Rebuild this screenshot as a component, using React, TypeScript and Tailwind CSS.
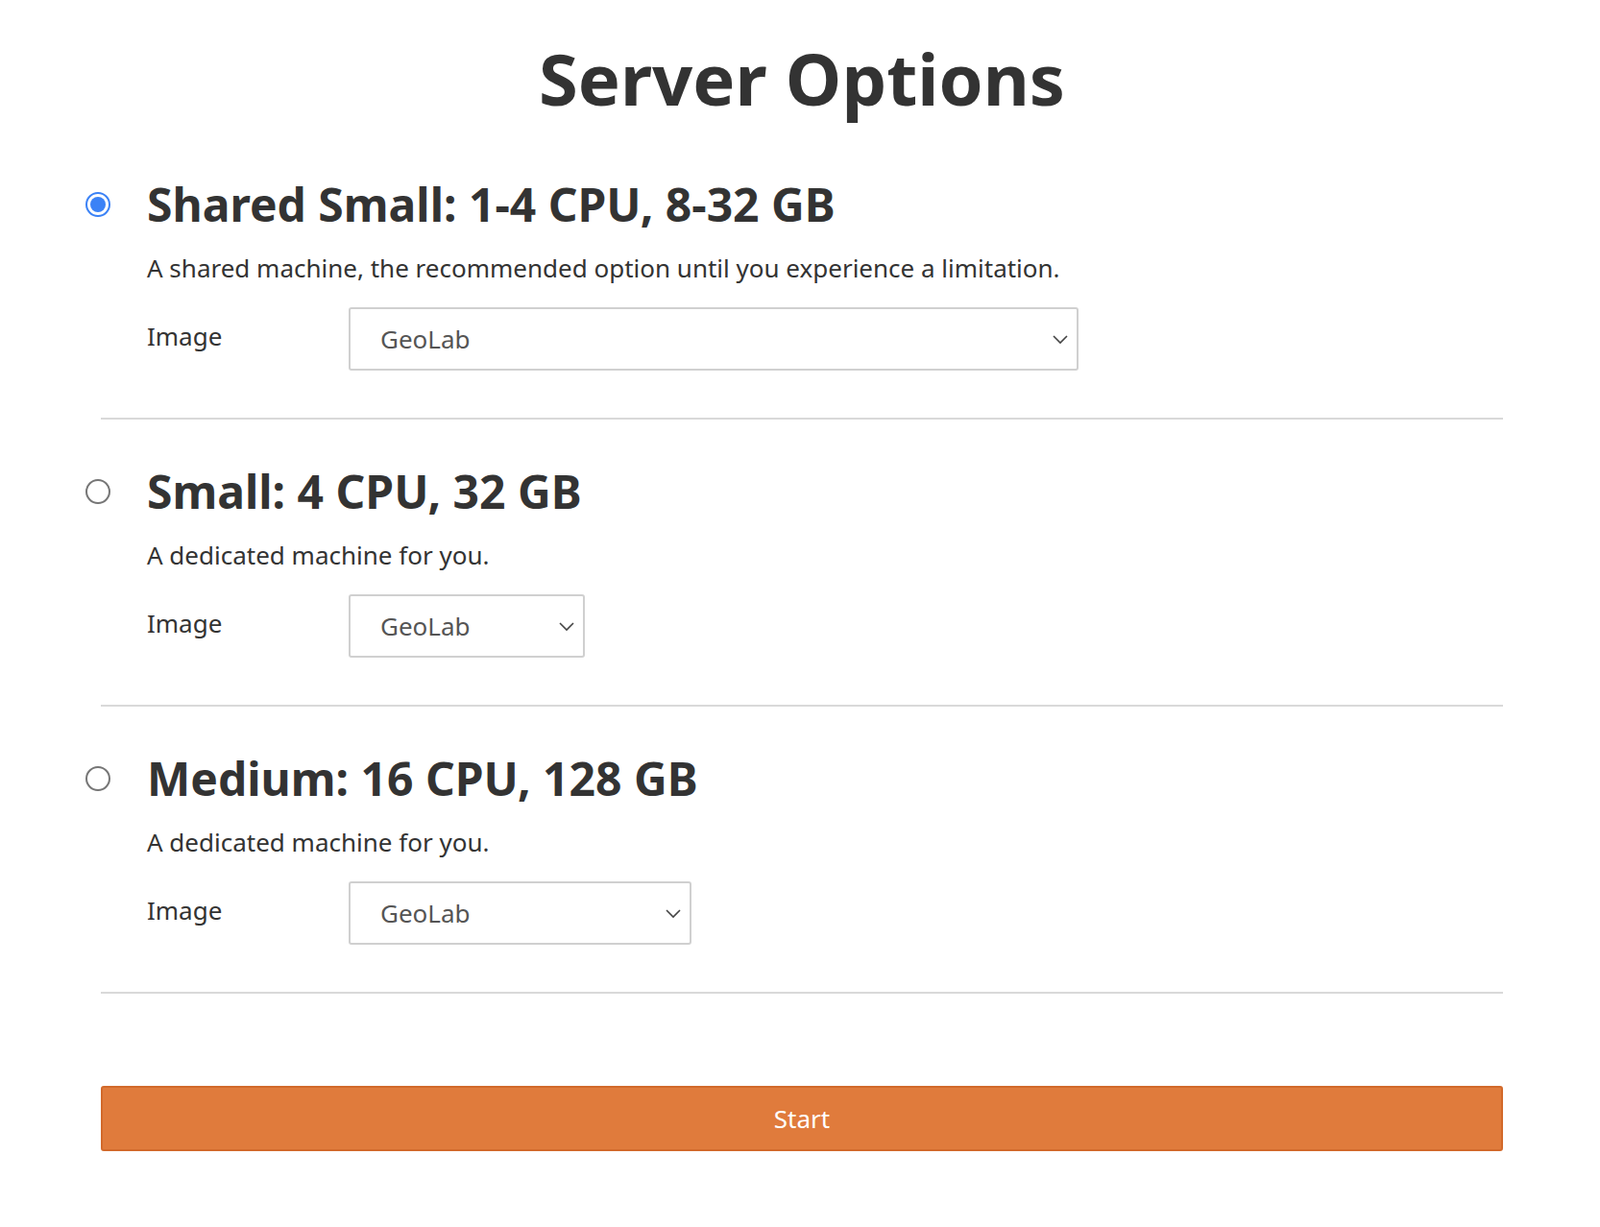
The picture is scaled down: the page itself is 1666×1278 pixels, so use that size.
const OPTIONS = [
  {
    title: 'Shared Small: 1-4 CPU, 8-32 GB',
    desc: 'A shared machine, the recommended option until you experience a limitation.',
    selectWidth: 'w-[760px]',
    checked: true,
  },
  { title: 'Small: 4 CPU, 32 GB', desc: 'A dedicated machine for you.', selectWidth: 'w-[246px]', checked: false },
  { title: 'Medium: 16 CPU, 128 GB', desc: 'A dedicated machine for you.', selectWidth: 'w-[357px]', checked: false },
]

function Radio({ checked }: { checked: boolean }) {
  return checked ? (
    <span className="absolute left-[-16px] top-1/2 -translate-y-1/2 flex h-[26px] w-[26px] items-center justify-center rounded-full border-2 border-[#3b82f6] bg-white">
      <span className="h-[16px] w-[16px] rounded-full bg-[#3b82f6]" />
    </span>
  ) : (
    <span className="absolute left-[-16px] top-1/2 -translate-y-1/2 h-[26px] w-[26px] rounded-full border-2 border-[#767676] bg-white" />
  )
}

export default function App() {
  return (
    <div className="min-h-screen bg-white text-[#333] font-['Liberation_Sans']">
      <div className="ml-[105px] w-[1460px] pt-[45px]">
        <h1 className="text-center text-[74px] font-bold leading-none">Server Options</h1>
        <div className="mt-[70px]">
          {OPTIONS.map((o, i) => (
            <div key={i} className={i > 0 ? 'pt-[51px]' : ''}>
              <div className="relative pl-[48px]">
                <Radio checked={o.checked} />
                <h3 className="text-[48px] font-bold leading-none">{o.title}</h3>
              </div>
              <p className="mt-[27px] pl-[48px] text-[26px] leading-[30px]">{o.desc}</p>
              <div className="mt-[26px] flex items-center pl-[48px]">
                <span className="w-[210px] -mt-[6px] text-[26px]">Image</span>
                <div
                  className={`relative flex h-[66px] items-center rounded-[3px] border-2 border-[#d0d0d0] bg-white pl-[31px] text-[26px] text-[#555] ${o.selectWidth}`}
                >
                  GeoLab
                  <svg
                    className="absolute right-[8px] top-1/2 -translate-y-1/2"
                    width="18"
                    height="12"
                    viewBox="0 0 18 12"
                    fill="none"
                    stroke="#444"
                    strokeWidth="1.6"
                  >
                    <path d="M2 3l7 7 7-7" />
                  </svg>
                </div>
              </div>
              <div className="mt-[49px] h-[2px] bg-[#d9d9d9]" />
            </div>
          ))}
        </div>
        <button className="mt-[96px] flex h-[68px] w-full items-center justify-center rounded-[3px] border-2 border-[#d2692a] bg-[#e07b3c] text-[26px] text-white">
          Start
        </button>
      </div>
    </div>
  )
}
